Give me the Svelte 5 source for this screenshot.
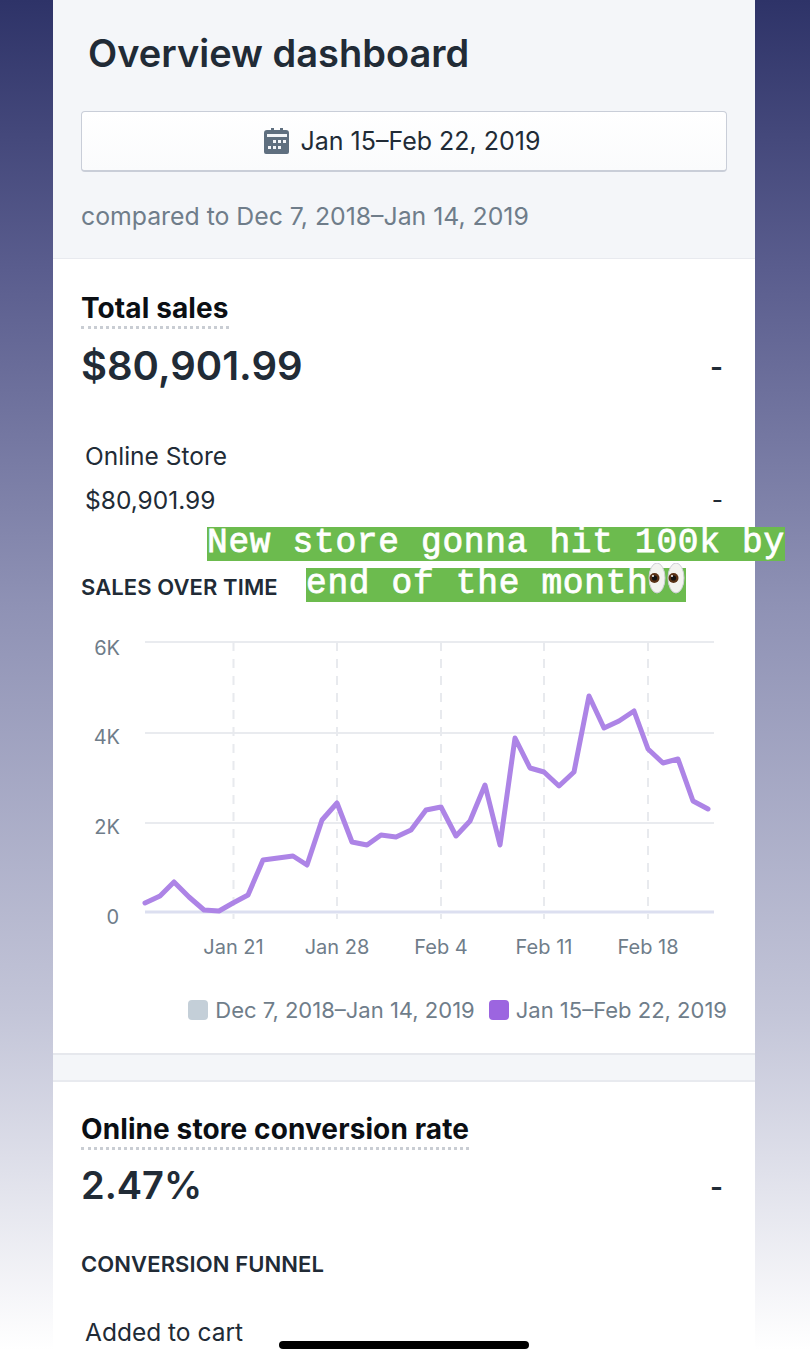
<script>
	// chart points are in page-like coordinates, see the viewBox on the svg
	const sales = [
		[145, 902], [160, 895], [174, 881], [189, 896], [204, 909], [219, 910], [233, 902], [248, 894],
		[263, 859], [278, 857], [293, 855], [307, 864], [322, 819], [337, 802], [352, 841], [367, 844],
		[381, 834], [396, 836], [411, 829], [426, 809], [441, 806], [456, 835], [470, 820], [485, 784],
		[500, 844], [515, 737], [530, 767], [544, 771], [559, 785], [574, 771], [589, 695], [604, 727],
		[619, 720], [634, 710], [648, 748], [663, 762], [678, 758], [693, 800], [708, 808]
	];
	const line = sales.map((p) => p.join(',')).join(' ');

	const yTicks = [
		{ label: '6K', y: 641, text: 654 },
		{ label: '4K', y: 732, text: 743 },
		{ label: '2K', y: 822, text: 833 }
	];
	const xTicks = [
		{ label: 'Jan 21', x: 233.5 },
		{ label: 'Jan 28', x: 337 },
		{ label: 'Feb 4', x: 441 },
		{ label: 'Feb 11', x: 544 },
		{ label: 'Feb 18', x: 648 }
	];
</script>

<div class="screen">
	<main class="column">
		<header class="top">
			<h1>Overview dashboard</h1>
			<button class="date">
				<svg class="cal" viewBox="0 0 28 28" width="28" height="28" aria-hidden="true">
					<path fill="#5f6f7f" d="M5 3h3V1h3v2h6V1h3v2h3a3 3 0 0 1 3 3v19a2 2 0 0 1-2 2H3a2 2 0 0 1-2-2V6a3 3 0 0 1 3-3z" />
					<rect x="4" y="7" width="20" height="3" fill="#f4f6f9" />
					<g fill="#f4f6f9">
						<rect x="10" y="13" width="3" height="3" /><rect x="15" y="13" width="3" height="3" /><rect x="20" y="13" width="3" height="3" />
						<rect x="5" y="19" width="3" height="3" /><rect x="10" y="19" width="3" height="3" /><rect x="15" y="19" width="3" height="3" />
					</g>
				</svg>
				Jan 15–Feb 22, 2019
			</button>
			<p class="compare">compared to Dec 7, 2018–Jan 14, 2019</p>
		</header>

		<section class="card sales">
			<h2><span>Total sales</span></h2>
			<div class="row big">
				<span class="value">$80,901.99</span>
				<span class="dash">-</span>
			</div>
			<div class="store">Online Store</div>
			<div class="row amount">
				<span>$80,901.99</span>
				<span class="small-dash">-</span>
			</div>
			<h3 class="over">SALES OVER TIME</h3>

			<svg class="chart" viewBox="81 625 646 335" width="646" height="335">
				{#each yTicks as t}
					<line x1="145" x2="714" y1={t.y} y2={t.y} class="grid" />
					<text x="120" y={t.text} text-anchor="end">{t.label}</text>
				{/each}
				{#each xTicks as t}
					<line x1={t.x} x2={t.x} y1="641" y2="918" class="vert" />
					<text x={t.x} y="953" text-anchor="middle">{t.label}</text>
				{/each}
				<line x1="145" x2="714" y1="911" y2="911" class="base" />
				<text x="119" y="923" text-anchor="end">0</text>
				<polyline points={line} class="trend" />
			</svg>

			<div class="legend">
				<span class="key"><i class="swatch grey"></i>Dec 7, 2018–Jan 14, 2019</span>
				<span class="key"><i class="swatch purple"></i>Jan 15–Feb 22, 2019</span>
			</div>
		</section>

		<section class="card conversion">
			<h2><span>Online store conversion rate</span></h2>
			<div class="row big">
				<span class="value">2.47%</span>
				<span class="dash">-</span>
			</div>
			<h3 class="funnel">CONVERSION FUNNEL</h3>
			<div class="store cart">Added to cart</div>
		</section>
	</main>

	<div class="caption">
		<div class="cap-line"><span>New store gonna hit 100k by</span></div>
		<div class="cap-line second">
			<span>end of the month<svg class="eyes" viewBox="0 0 38 32" width="38" height="32" aria-hidden="true">
					<ellipse cx="9" cy="15" rx="8" ry="15" fill="#f3f3ef" stroke="#cfcfd6" />
					<ellipse cx="28" cy="15" rx="8" ry="15" fill="#f3f3ef" stroke="#cfcfd6" />
					<circle cx="6.5" cy="15" r="5" fill="#5a3216" />
					<circle cx="25.5" cy="15" r="5" fill="#5a3216" />
					<circle cx="6.5" cy="15" r="2.6" fill="#111" />
					<circle cx="25.5" cy="15" r="2.6" fill="#111" />
					<circle cx="5" cy="13" r="1" fill="#fff" />
					<circle cx="24" cy="13" r="1" fill="#fff" />
				</svg></span>
		</div>
	</div>

	<div class="home"></div>
</div>

<style>
	:global(body) {
		margin: 0;
	}
	.screen {
		position: relative;
		width: 810px;
		height: 1350px;
		overflow: hidden;
		background: linear-gradient(#2e3368 0%, #5a5d8e 20%, #8f92b5 45%, #c3c5d8 75%, #ffffff 100%);
		font-family: Inter, "Liberation Sans", sans-serif;
		color: #212b36;
	}
	.column {
		width: 702px;
		height: 1350px;
		margin-left: 53px;
		background: #f4f6f9;
		overflow: hidden;
	}
	.top {
		height: 259px;
		padding: 0 28px;
		box-sizing: border-box;
		border-bottom: 1px solid #e8eaef;
	}
	h1 {
		margin: 0;
		padding: 31px 0 0 7px;
		height: 111px;
		box-sizing: border-box;
		font-size: 38px;
		line-height: 44px;
		font-weight: 600;
	}
	.date {
		display: flex;
		align-items: center;
		justify-content: center;
		gap: 9px;
		width: 646px;
		height: 61px;
		padding: 0 4px 0 0;
		border: 1px solid #c9ced8;
		border-bottom-width: 2px;
		border-radius: 4px;
		background: linear-gradient(#ffffff, #fafbfc);
		font: 400 25px/30px Inter, "Liberation Sans", sans-serif;
		color: #212b36;
	}
	.compare {
		margin: 29px 0 0;
		font-size: 24.8px;
		line-height: 30px;
		color: #6f7d8a;
	}
	.card {
		background: #fff;
		padding: 0 28px;
	}
	.sales {
		height: 796px;
		box-sizing: border-box;
		border-bottom: 2px solid #e6e8ed;
	}
	h2 {
		margin: 0;
		padding-top: 32px;
		font-size: 28px;
		line-height: 34px;
		font-weight: 700;
		color: #0b0f14;
		letter-spacing: 0.1px;
	}
	h2 span {
		display: inline-block;
		border-bottom: 3px dotted #c9cdd3;
		padding-bottom: 1px;
	}
	.row {
		display: flex;
		justify-content: space-between;
		align-items: center;
	}
	.big {
		height: 58px;
		margin-top: 7px;
	}
	.value {
		font-size: 40px;
		font-weight: 600;
	}
	.dash {
		font-size: 28px;
		font-weight: 600;
		padding: 4px 4px 0 0;
	}
	.store {
		margin: 46px 0 0 4px;
		font-size: 24.5px;
		line-height: 32px;
		color: #212b36;
	}
	.amount {
		margin: 12px 0 0 4px;
		font-size: 24.5px;
		line-height: 32px;
	}
	.small-dash {
		padding-right: 4px;
	}
	h3 {
		margin: 0;
		font-size: 22px;
		line-height: 28px;
		font-weight: 600;
		letter-spacing: 0.1px;
	}
	.over {
		margin-top: 57px;
	}
	.chart {
		display: block;
		margin-top: 25px;
	}
	.chart text {
		font-size: 20px;
		fill: #6f7d8a;
	}
	.grid {
		stroke: #e9ebef;
		stroke-width: 2;
	}
	.vert {
		stroke: #e8eaee;
		stroke-width: 2;
		stroke-dasharray: 9 8;
	}
	.base {
		stroke: #dcdff0;
		stroke-width: 3;
	}
	.trend {
		fill: none;
		stroke: #ad84e6;
		stroke-width: 5;
		stroke-linejoin: round;
		stroke-linecap: round;
	}
	.legend {
		display: flex;
		justify-content: flex-end;
		gap: 14px;
		margin-top: 34px;
		font-size: 22px;
		line-height: 30px;
		color: #6f7d8a;
	}
	.key {
		display: flex;
		align-items: center;
		gap: 7px;
	}
	.swatch {
		width: 20px;
		height: 20px;
		border-radius: 4px;
	}
	.grey {
		background: #c4cfd8;
	}
	.purple {
		background: #9c65e0;
	}
	.conversion {
		margin-top: 25px;
		height: 300px;
		border-top: 2px solid #e8eaef;
	}
	.conversion h2 {
		padding-top: 30px;
	}
	.conversion .big {
		margin-top: 6px;
	}
	.conversion .value {
		font-size: 38px;
	}
	.funnel {
		margin-top: 36px;
	}
	.cart {
		margin-top: 38px;
	}
	/* story caption that lies over the page */
	.caption {
		position: absolute;
		left: 0;
		top: 527px;
		width: 810px;
		font: 400 34.5px/32px "Liberation Mono", monospace;
		letter-spacing: 0.7px;
		color: #fff;
		-webkit-text-stroke: 0.8px #fff;
	}
	.cap-line {
		position: absolute;
		top: 0;
		left: 207px;
		white-space: nowrap;
		height: 34px;
	}
	.second {
		top: 41px;
		left: 306px;
	}
	.cap-line span {
		display: inline-block;
		position: relative;
		background: #6cbb4e;
		height: 34px;
	}
	.eyes {
		position: absolute;
		right: 0;
		top: -5px;
	}
	.second span {
		padding-right: 38px;
	}
	.home {
		position: absolute;
		left: 279px;
		bottom: 1px;
		width: 250px;
		height: 8px;
		border-radius: 4px;
		background: #000;
	}
</style>
